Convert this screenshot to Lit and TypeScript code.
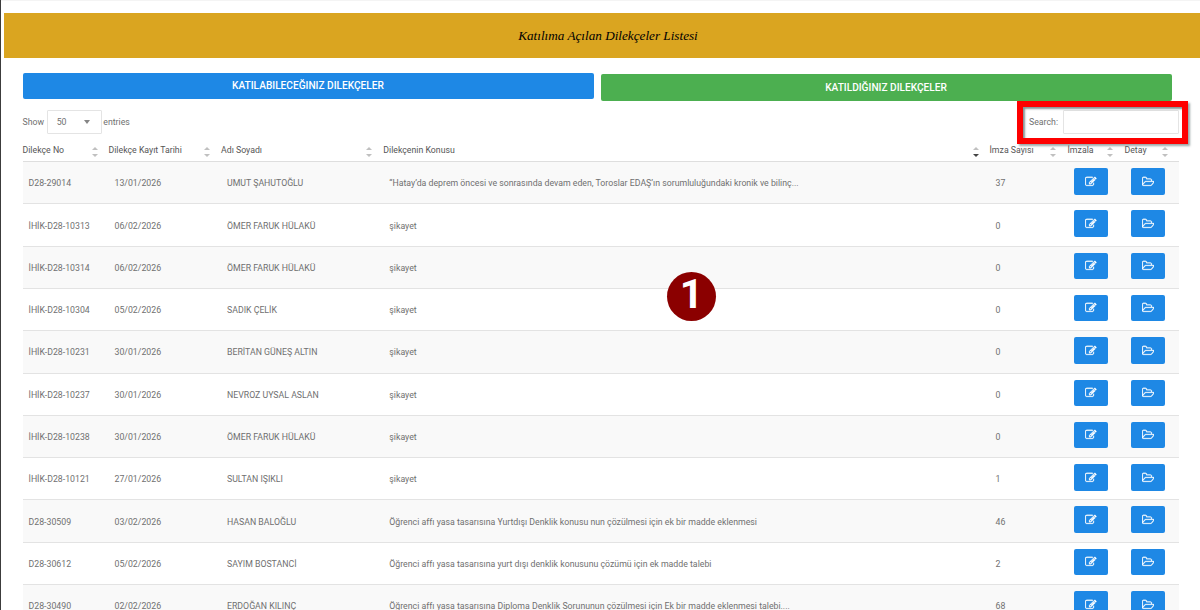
import { LitElement, html, css } from "lit";
import { customElement, property } from "lit/decorators.js";

type Petition = [string, string, string, string, number];

const S = "şikayet";
const PETITIONS: Petition[] = [
  ["D28-29014", "13/01/2026", "UMUT ŞAHUTOĞLU", "“Hatay’da deprem öncesi ve sonrasında devam eden, Toroslar EDAŞ’ın sorumluluğundaki kronik ve bilinç...", 37],
  ["İHİK-D28-10313", "06/02/2026", "ÖMER FARUK HÜLAKÜ", S, 0],
  ["İHİK-D28-10314", "06/02/2026", "ÖMER FARUK HÜLAKÜ", S, 0],
  ["İHİK-D28-10304", "05/02/2026", "SADIK ÇELİK", S, 0],
  ["İHİK-D28-10231", "30/01/2026", "BERİTAN GÜNEŞ ALTIN", S, 0],
  ["İHİK-D28-10237", "30/01/2026", "NEVROZ UYSAL ASLAN", S, 0],
  ["İHİK-D28-10238", "30/01/2026", "ÖMER FARUK HÜLAKÜ", S, 0],
  ["İHİK-D28-10121", "27/01/2026", "SULTAN IŞIKLI", S, 1],
  ["D28-30509", "03/02/2026", "HASAN BALOĞLU", "Öğrenci affı yasa tasarısına Yurtdışı Denklik konusu nun çözülmesi için ek bir madde eklenmesi", 46],
  ["D28-30612", "05/02/2026", "SAYIM BOSTANCİ", "Öğrenci affı yasa tasarısına yurt dışı denklik konusunu çözümü için ek madde talebi", 2],
  ["D28-30490", "02/02/2026", "ERDOĞAN KILINÇ", "Öğrenci affı yasa tasarısına Diploma Denklik Sorununun çözülmesi için Ek bir madde eklenmesi talebi....", 68],
];

const HEADS = ["Dilekçe No", "Dilekçe Kayıt Tarihi", "Adı Soyadı", "Dilekçenin Konusu", "İmza Sayısı", "İmzala", "Detay"];

@customElement("icon-button")
class IconButton extends LitElement {
  @property() kind = "edit";

  static styles = css`
    :host { display: block; }
    .btn {
      display: flex; align-items: center; justify-content: center;
      width: 100%; height: 26.5px; padding: 0; border: 0;
      border-radius: 2px; background: #1e88e5;
    }
    svg { display: block; height: 11.5px; fill: #fff; stroke: #fff; stroke-width: 40; }
  `;

  render() {
    return html`<button class="btn">
      ${this.kind === "edit"
        ? html`<svg viewBox="0 0 1792 1792"><path d="M888 1184l116-116-152-152-116 116v56h96v96h56zm440-720q-16-16-33 1l-350 350q-17 17-1 33t33-1l350-350q17-17 1-33zm80 594v190q0 119-84.5 203.5t-203.5 84.5h-832q-119 0-203.5-84.5t-84.5-203.5v-832q0-119 84.5-203.5t203.5-84.5h832q63 0 117 25 15 7 18 23 3 17-9 29l-49 49q-14 14-32 8-23-6-45-6h-832q-66 0-113 47t-47 113v832q0 66 47 113t113 47h832q66 0 113-47t47-113v-126q0-13 9-22l64-64q15-15 35-7t20 29zm-96-738l288 288-672 672h-288v-288zm444 132l-92 92-288-288 92-92q28-28 68-28t68 28l152 152q28 28 28 68t-28 68z"/></svg>`
        : html`<svg viewBox="64 0 1924 1792"><path d="M1845 931q0-35-53-35h-1088q-40 0-85.500 21.500t-71.500 52.500l-294 363q-18 24-18 40 0 35 53 35h1088q40 0 86-22t71-53l294-363q18-22 18-39zm-1141-163h768v-160q0-40-28-68t-68-28h-576q-40 0-68-28t-28-68v-64q0-40-28-68t-68-28h-320q-40 0-68 28t-28 68v853l256-315q44-53 116-87.500t140-34.500zm1269 163q0 62-46 120l-295 363q-43 53-116 87.500t-140 34.500h-1088q-92 0-158-66t-66-158v-960q0-92 66-158t158-66h320q92 0 158 66t66 158v32h544q92 0 158 66t66 158v160h192q54 0 99 24.500t67 70.500q15 32 15 68z"/></svg>`}
    </button>`;
  }
}

@customElement("app-root")
class AppRoot extends LitElement {
  static styles = css`
    :host {
      display: block; position: relative; box-sizing: border-box;
      height: 610px; overflow: hidden;
      border-left: 1px solid #3c3c3c; background: #fff;
      font: 8.76px/12px Roboto, sans-serif;
      color: #707070;
    }
    * { box-sizing: border-box; }
    .strip { height: 1px; background: #f4f4f4; }
    .banner {
      display: flex; align-items: center; justify-content: center;
      height: 45px; margin: 12px 0 0 3px; padding: 0 0 0 12px;
      background: #daa520; color: #000;
      font: italic 13.2px/18px "Liberation Serif", serif;
    }
    .title { white-space: nowrap; }
    .tabs { display: flex; gap: 7px; margin: 15px 28.5px 0 21.5px; align-items: flex-start; }
    .tab {
      flex: 1; height: 26px; border: 0; padding: 0; border-radius: 2px;
      color: #fff; background: #1e88e5;
      font: 500 10.15px/26px Roboto, sans-serif;
    }
    .tab.green { height: 26.5px; background: #4caf50; margin-top: 1.4px; }
    .tools {
      display: flex; align-items: center; height: 24px;
      margin: 9.1px 21.5px 0 21.5px;
    }
    .length {
      display: flex; align-items: center; justify-content: space-between;
      width: 55px; height: 24px; margin: 0 1.6px 0 2.6px; padding: 0 11px 0 9px;
      border: 1px solid #e4e4e4; border-radius: 1px;
    }
    .caret { border: 3px solid transparent; border-top: 4px solid #858585; border-bottom: 0; }
    .search-label { margin-left: auto; }
    .search { width: 116px; height: 24px; margin-left: 4.5px; border: 1px solid #e4e4e4; border-radius: 1px; background: #fff; padding: 0; }
    .table { margin: 3px 21.5px 0 21.5px; }
    .row {
      display: grid; align-items: center; height: 42.3px;
      grid-template-columns: 86px 112.5px 162.3px 606.2px 78px 57px 1fr;
      border-bottom: 1px solid #e3e3e3;
    }
    .row.striped { background: #f9f9f9; }
    .head { height: 25.1px; color: #565656; border-bottom-color: #dedede; }
    .th { display: flex; justify-content: space-between; align-items: center; white-space: nowrap; height: 24px; }
    .th span { padding-top: 1px; }
    .sort { display: block; width: 6px; height: 10px; margin: 5px 11px 0 0; fill: #c0c0c0; }
    .sorted .sort { margin-right: 10.5px; }
    .sorted .down { fill: #444; }
    .td { padding: 1px 0 0 6px; white-space: nowrap; }
    .action { align-self: start; padding: 6px 0 0 6.7px; }
    .edit { width: 33.5px; }
    .open { width: 34.3px; }
    .frame {
      position: absolute; left: 1016px; top: 101px; width: 171px; height: 43px;
      border: 6.5px solid #fe0000;
      box-shadow: 2px 2px 2px #5f7474a0, inset 2px 2px 2px #5f7474c0;
    }
    .marker {
      position: absolute; left: 666px; top: 272px; width: 49px; height: 49px;
      border-radius: 50%; background: #8b0000; color: #fff;
      font: bold 41px/45px Roboto, sans-serif; text-align: center;
    }
  `;

  render() {
    return html`
      <div class="strip"></div>
      <div class="banner"><span class="title">Katılıma Açılan Dilekçeler Listesi</span></div>
      <div class="tabs">
        <button class="tab">KATILABILECEĞINIZ DILEKÇELER</button>
        <button class="tab green">KATILDIĞINIZ DILEKÇELER</button>
      </div>
      <div class="tools">
        <span>Show</span>
        <div class="length"><span>50</span><i class="caret"></i></div>
        <span>entries</span>
        <span class="search-label">Search:</span>
        <input class="search" />
      </div>
      <div class="table">
        <div class="row head">
          ${HEADS.map((h, i) => html`<div class="th ${i === 3 ? "sorted" : ""}">
            <span>${h}</span>
            <svg class="sort" viewBox="0 0 6 10"><path d="M0 3L3 0L6 3Z"/><path class="down" d="M0 7L3 10L6 7Z"/></svg>
          </div>`)}
        </div>
        ${PETITIONS.map((p, i) => html`<div class="row ${i % 2 ? "" : "striped"}">
          ${p.map((v) => html`<div class="td">${v}</div>`)}
          <div class="action"><icon-button class="edit" kind="edit"></icon-button></div>
          <div class="action"><icon-button class="open" kind="open"></icon-button></div>
        </div>`)}
      </div>
      <div class="frame"></div>
      <div class="marker">1</div>
    `;
  }
}
